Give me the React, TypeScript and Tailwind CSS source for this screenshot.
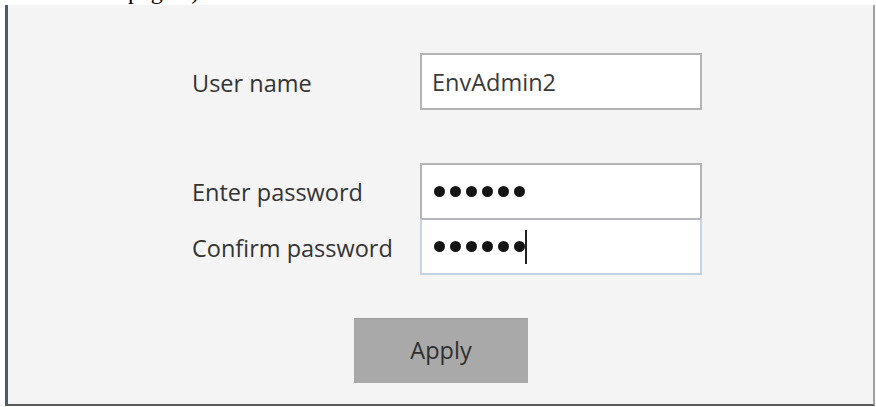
const labelCls = "text-[23.5px] text-[#333] pt-[4px]";
const fieldCls = "h-full w-[282px] bg-white flex items-center pl-[12px]";

function Dots({ count, caret }: { count: number; caret?: boolean }) {
  return (
    <div className="flex items-center gap-[5px]">
      {Array.from({ length: count }).map((_, i) => (
        <span key={i} className="w-[11px] h-[11px] rounded-full bg-[#141414]" />
      ))}
      {caret && <span className="w-[2px] h-[34px] bg-[#222] -ml-[5px]" />}
    </div>
  );
}

export default function App() {
  return (
    <div
      className="w-[876px] h-[407px] bg-white flex flex-col overflow-hidden"
      style={{ fontFamily: '"Open Sans", "Noto Sans", sans-serif' }}
    >
      {/* clipped line of the document above the screenshot */}
      <div className="h-[5px] overflow-hidden pl-[128px]">
        <p
          className="-mt-[21px] text-[24px] text-black leading-[24px]"
          style={{ fontFamily: '"Liberation Serif", serif' }}
        >
          page 9)
        </p>
      </div>

      <div className="flex-1 ml-[5px] mr-[1px] mb-[1px] bg-[#f4f4f4] border-l-[3px] border-l-[#4d5a6e] border-b-[2px] border-b-[#5a5a5a] border-r-[2px] border-r-[#a0a0a8] pt-[48px] pl-[184px]">
        <div className="grid grid-cols-[228px_282px]">
          <div className="h-[57px] flex items-center">
            <span className={labelCls}>User name</span>
          </div>
          <div className="h-[57px] border-2 border-[#b4b4b4] bg-white flex items-center pl-[10px]">
            <span className="text-[23.5px] text-[#3a3a3a] pt-[2px]">EnvAdmin2</span>
          </div>

          <div className="h-[53px] col-span-2" />

          <div className="h-[55px] flex items-center">
            <span className={labelCls}>Enter password</span>
          </div>
          <div className={fieldCls + " border-2 border-b-0 border-[#b4b4b4]"}>
            <Dots count={6} />
          </div>

          <div className="h-[57px] flex items-center">
            <span className={labelCls}>Confirm password</span>
          </div>
          <div className={fieldCls + " border-2 border-[#c4d2e2] border-t-[#b4b8bc]"}>
            <Dots count={6} caret />
          </div>
        </div>

        <div className="pt-[43px] pl-[162px]">
          <button className="w-[174px] h-[65px] bg-[#a9a9a9] text-[23.5px] text-[#2f2f2f] border-t border-[#9c9c9c]">
            Apply
          </button>
        </div>
      </div>
    </div>
  );
}
